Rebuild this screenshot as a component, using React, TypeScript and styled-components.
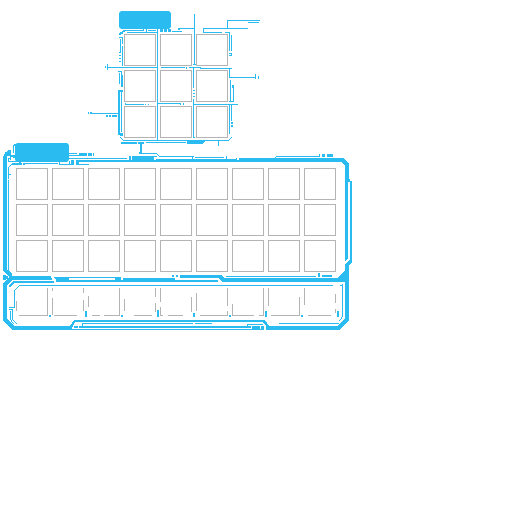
import React from "react";
import styled, { createGlobalStyle } from "styled-components";

const CYAN = "#2abbf0";
const GREY = "#b4b4b4";

const GlobalStyle = createGlobalStyle`
  *, *::before, *::after { box-sizing: border-box; }
  body { margin: 0; background: #fff; font-family: "Liberation Sans", sans-serif; overflow: hidden; }
`;

const Screen = styled.main`
  display: flex;
  flex-direction: column;
  align-items: flex-start;
  width: 512px;
  height: 512px;
  padding-top: 11px;
  background: #fff;
`;

const Panel = styled.section<{ $width: number; $height: number; $indent: number }>`
  position: relative;
  display: flex;
  flex-direction: column;
  align-items: flex-start;
  width: ${(p) => p.$width}px;
  height: ${(p) => p.$height}px;
  margin-left: ${(p) => p.$indent}px;
`;

const Tab = styled.header<{ $width: number; $height: number; $indent: number; $gap: number }>`
  flex: none;
  width: ${(p) => p.$width}px;
  height: ${(p) => p.$height}px;
  margin-left: ${(p) => p.$indent}px;
  margin-bottom: ${(p) => p.$gap}px;
  background: ${CYAN};
  clip-path: polygon(
    2px 0, calc(100% - 2px) 0, 100% 2px, 100% calc(100% - 2px),
    calc(100% - 2px) 100%, 2px 100%, 0 calc(100% - 2px), 0 2px
  );
`;

const SlotGrid = styled.div<{ $columns: number; $indent: number }>`
  display: grid;
  grid-template-columns: repeat(${(p) => p.$columns}, 32px);
  grid-auto-rows: 32px;
  gap: 4px;
  margin-left: ${(p) => p.$indent}px;
`;

const Slot = styled.div`
  border: 1px solid ${GREY};
`;

const Hotbar = styled(SlotGrid)`
  margin-top: 12px;
`;

const FadedSlot = styled.svg`
  display: block;
  width: 32px;
  height: 32px;
  fill: ${GREY};
`;

const Circuit = styled.svg`
  position: absolute;
  top: 0;
  left: 0;
  width: 100%;
  height: 100%;
  pointer-events: none;
  fill: ${CYAN};
  shape-rendering: crispEdges;
`;

type Box = [x: number, y: number, w: number, h: number];

const trace = (boxes: Box[]) =>
  boxes.map(([x, y, w, h]) => `M${x} ${y}h${w}v${h}h${-w}z`).join("");

const craftingTraces: Box[] = [
  // top edge
  [127, 32, 30, 1], [125, 30, 19, 1], [143, 29, 1, 2], [146, 28, 1, 4], [148, 30, 8, 1],
  [160, 28, 3, 4], [164, 28, 3, 4], [168, 29, 3, 3], [172, 31, 10, 1],
  [178, 28, 2, 2], [180, 28, 15, 1],
  [119, 33, 2, 2], [120, 32, 3, 2], [122, 31, 3, 1], [123, 30, 2, 1],
  [227, 20, 33, 1], [227, 20, 1, 8], [248, 22, 11, 1], [203, 28, 45, 1],
  [203, 28, 1, 5], [203, 32, 19, 1], [225, 32, 5, 1],
  // left edge
  [119, 37, 4, 1], [122, 37, 1, 7], [120, 39, 1, 14], [119, 52, 2, 1],
  [119, 55, 2, 1], [119, 58, 2, 1], [119, 61, 2, 1], [122, 46, 1, 20],
  [107, 64, 1, 6], [105, 66, 1, 2], [108, 67, 49, 1],
  [118, 71, 4, 1], [121, 71, 1, 16], [122, 75, 1, 12], [119, 73, 1, 11],
  [118, 90, 5, 2], [118, 90, 2, 45], [120, 133, 3, 3], [121, 92, 1, 40],
  [88, 112, 1, 2], [90, 112, 2, 2], [91, 113, 27, 1],
  [106, 115, 2, 2], [109, 115, 2, 2], [112, 115, 5, 2],
  // inner cross lines
  [157, 29, 1, 111], [161, 67, 24, 1], [186, 67, 1, 2], [189, 67, 12, 1], [200, 68, 32, 1],
  [125, 103, 1, 2], [126, 104, 18, 1], [145, 104, 1, 1], [148, 104, 1, 1],
  [158, 103, 23, 1], [180, 103, 1, 2], [183, 103, 1, 2],
  [194, 14, 1, 51], [193, 64, 3, 1], [193, 68, 1, 20],
  [193, 90, 2, 1], [193, 93, 2, 1], [193, 96, 2, 1], [193, 99, 1, 39], [193, 137, 2, 1],
  [194, 104, 44, 1],
  // right edge
  [229, 32, 1, 19], [231, 35, 1, 16], [229, 53, 3, 1], [231, 53, 1, 3], [229, 55, 3, 1],
  [229, 68, 1, 10], [229, 77, 26, 1], [255, 74, 1, 5], [258, 76, 1, 3],
  [230, 80, 1, 22], [229, 101, 5, 1], [233, 85, 1, 17], [232, 85, 2, 3],
  [229, 105, 1, 29], [231, 105, 1, 16], [231, 122, 2, 2], [231, 125, 2, 2],
  // bottom edge
  [120, 137, 1, 1], [121, 138, 1, 1], [122, 139, 1, 1], [123, 140, 106, 1],
  [229, 139, 1, 1], [230, 138, 1, 1], [231, 137, 1, 1],
  [121, 142, 16, 2], [138, 142, 6, 2], [140, 144, 2, 10], [139, 152, 2, 2],
  [146, 142, 40, 1], [187, 141, 18, 1], [187, 142, 17, 1], [187, 143, 16, 1], [218, 140, 1, 6],
];

const inventoryTraces: Box[] = [
  // upper edge
  [141, 153, 16, 1], [157, 154, 1, 1], [158, 155, 1, 1], [159, 156, 35, 1],
  [69, 153, 8, 1], [69, 155, 15, 1], [79, 153, 8, 3], [88, 153, 4, 3], [93, 153, 1, 3],
  [69, 158, 58, 1], [129, 156, 2, 4], [132, 156, 22, 4], [154, 156, 3, 1],
  [156, 159, 81, 1], [192, 156, 1, 3], [195, 157, 29, 1], [226, 156, 1, 3], [236, 158, 1, 2],
  [76, 160, 163, 2], [239, 158, 104, 4],
  [59, 161, 1, 4], [59, 164, 15, 1], [69, 161, 1, 3], [71, 160, 3, 5], [76, 160, 3, 5],
  [79, 164, 10, 1], [275, 157, 1, 1], [276, 156, 44, 1], [319, 154, 1, 3],
  [322, 154, 3, 3], [327, 154, 6, 3],
  // upper left knot
  [13, 145, 1, 8], [13, 145, 3, 1], [14, 144, 2, 1],
  [10, 150, 1, 10], [8, 150, 3, 1], [7, 151, 3, 1], [5, 152, 6, 2], [4, 154, 7, 2],
  [11, 155, 5, 2], [9, 158, 2, 1], [8, 158, 1, 4], [8, 161, 12, 1], [19, 161, 2, 2],
  [13, 157, 2, 1],
  [11, 164, 11, 1], [12, 163, 10, 1], [23, 163, 2, 2], [25, 163, 33, 1],
  [10, 165, 1, 1], [9, 166, 1, 1], [8, 167, 1, 12], [8, 174, 3, 1], [8, 180, 1, 90],
  [3, 156, 4, 114],
  // wedge inside the left junction
  [3, 275, 3, 1], [3, 276, 5, 3], [3, 279, 3, 1],
  // divider
  [56, 280, 162, 2], [69, 277, 52, 1], [115, 278, 6, 2], [123, 278, 52, 2],
  [172, 275, 2, 2], [176, 275, 2, 2], [226, 276, 90, 1], [224, 278, 125, 4],
  [318, 273, 2, 4], [322, 275, 10, 2],
  // hotbar inset
  [19, 285, 314, 1], [340, 285, 3, 1], [342, 284, 1, 33],
  [341, 317, 1, 2], [340, 319, 1, 1], [339, 320, 1, 1],
  [18, 286, 1, 1], [17, 287, 1, 1], [16, 288, 1, 1], [15, 289, 1, 1],
  [14, 290, 1, 17], [9, 307, 6, 1], [9, 309, 4, 1], [12, 309, 1, 11],
  [13, 320, 1, 1], [14, 321, 1, 1], [15, 322, 1, 1], [16, 323, 1, 1],
  [10, 311, 1, 9], [11, 320, 1, 2], [12, 322, 1, 1], [13, 323, 1, 1],
  [49, 315, 2, 2], [85, 311, 2, 6], [121, 315, 2, 2], [157, 310, 2, 7], [193, 313, 2, 4],
  [229, 315, 2, 2], [265, 311, 2, 6], [301, 315, 2, 2], [337, 311, 2, 6],
  // bottom edge
  [74, 326, 4, 2], [79, 326, 172, 2], [71, 329, 191, 1], [82, 323, 111, 1], [82, 323, 1, 3],
  [195, 323, 17, 1], [247, 324, 16, 1], [247, 324, 1, 2], [252, 326, 8, 4], [261, 326, 3, 4],
  [279, 323, 60, 1],
  // right rail
  [345, 163, 4, 17], [345, 180, 3, 78], [348, 179, 2, 3], [350, 181, 2, 82],
  [345, 265, 4, 55],
];

const inventoryShapes = [
  // upper right corner
  "M339 158H343L349 164V168H345V165L341 162Z",
  // right rail returning into the frame
  "M352 262L349 266H345V264L350 259H352ZM345 258H348L345 261Z",
  // gusset above the divider
  "M337 278L345 271H349V279H337Z",
  // left junction
  "M3 270H7L12 275V276H51L52 279V280H12L7 285V316H3V283L9 278V276L3 271Z",
  "M8 269L12 274V276H10L8 272Z",
  "M9 287V285L13 281H54V283H14L10 287Z",
  // divider transitions
  "M54 277H69V280H56Z",
  "M180 275H221L226 280V282H223L218 278H180Z",
  // bottom frame
  "M3 315H7V319L14 326H70L74 320H265L269 326H337L345 318V310H349V320L339 330H266V326L263 322H75L71 330H13L3 321Z",
];

// Visible stretches of each hotbar slot's outline, local to the slot.
const hotbarOutlines: Box[][] = [
  [[0, 17, 1, 10], [3, 31, 29, 1], [31, 4, 1, 28]],
  [[0, 4, 1, 3], [0, 14, 1, 17], [2, 31, 23, 1], [31, 4, 1, 5], [31, 16, 1, 11]],
  [[0, 12, 1, 11], [4, 31, 8, 1], [16, 31, 16, 1], [31, 4, 1, 28]],
  [[0, 15, 1, 12], [10, 31, 18, 1], [31, 4, 1, 9], [31, 19, 1, 9]],
  [[0, 4, 1, 14], [0, 23, 1, 9], [0, 31, 3, 1], [8, 31, 15, 1], [31, 13, 1, 15]],
  [[0, 9, 1, 18], [4, 31, 28, 1], [31, 4, 1, 18], [31, 27, 1, 5]],
  [[0, 20, 1, 12], [0, 31, 22, 1], [27, 31, 5, 1], [31, 4, 1, 28]],
  [[0, 4, 1, 18], [3, 31, 29, 1], [31, 13, 1, 19]],
  [[0, 4, 1, 17], [4, 31, 23, 1], [31, 10, 1, 9], [31, 25, 1, 4]],
];

const Slots = ({ count }: { count: number }) => (
  <>
    {Array.from({ length: count }, (_, i) => (
      <Slot key={i} />
    ))}
  </>
);

export default function App() {
  return (
    <>
      <GlobalStyle />
      <Screen>
        <Panel $width={424} $height={132} $indent={88}>
          <Tab $width={52} $height={18} $indent={31} $gap={5} />
          <SlotGrid $columns={3} $indent={36}>
            <Slots count={9} />
          </SlotGrid>
          <Circuit viewBox="88 11 424 132" overflow="visible">
            <path d={trace(craftingTraces)} />
          </Circuit>
        </Panel>
        <Panel $width={512} $height={190} $indent={0}>
          <Tab $width={54} $height={19} $indent={15} $gap={6} />
          <SlotGrid $columns={9} $indent={16}>
            <Slots count={27} />
          </SlotGrid>
          <Hotbar $columns={9} $indent={16}>
            {hotbarOutlines.map((outline, i) => (
              <FadedSlot key={i} viewBox="0 0 32 32">
                <path d={trace(outline)} />
              </FadedSlot>
            ))}
          </Hotbar>
          <Circuit viewBox="0 143 512 190" overflow="visible">
            <path d={trace(inventoryTraces)} />
            {inventoryShapes.map((d) => (
              <path key={d} d={d} />
            ))}
          </Circuit>
        </Panel>
      </Screen>
    </>
  );
}
